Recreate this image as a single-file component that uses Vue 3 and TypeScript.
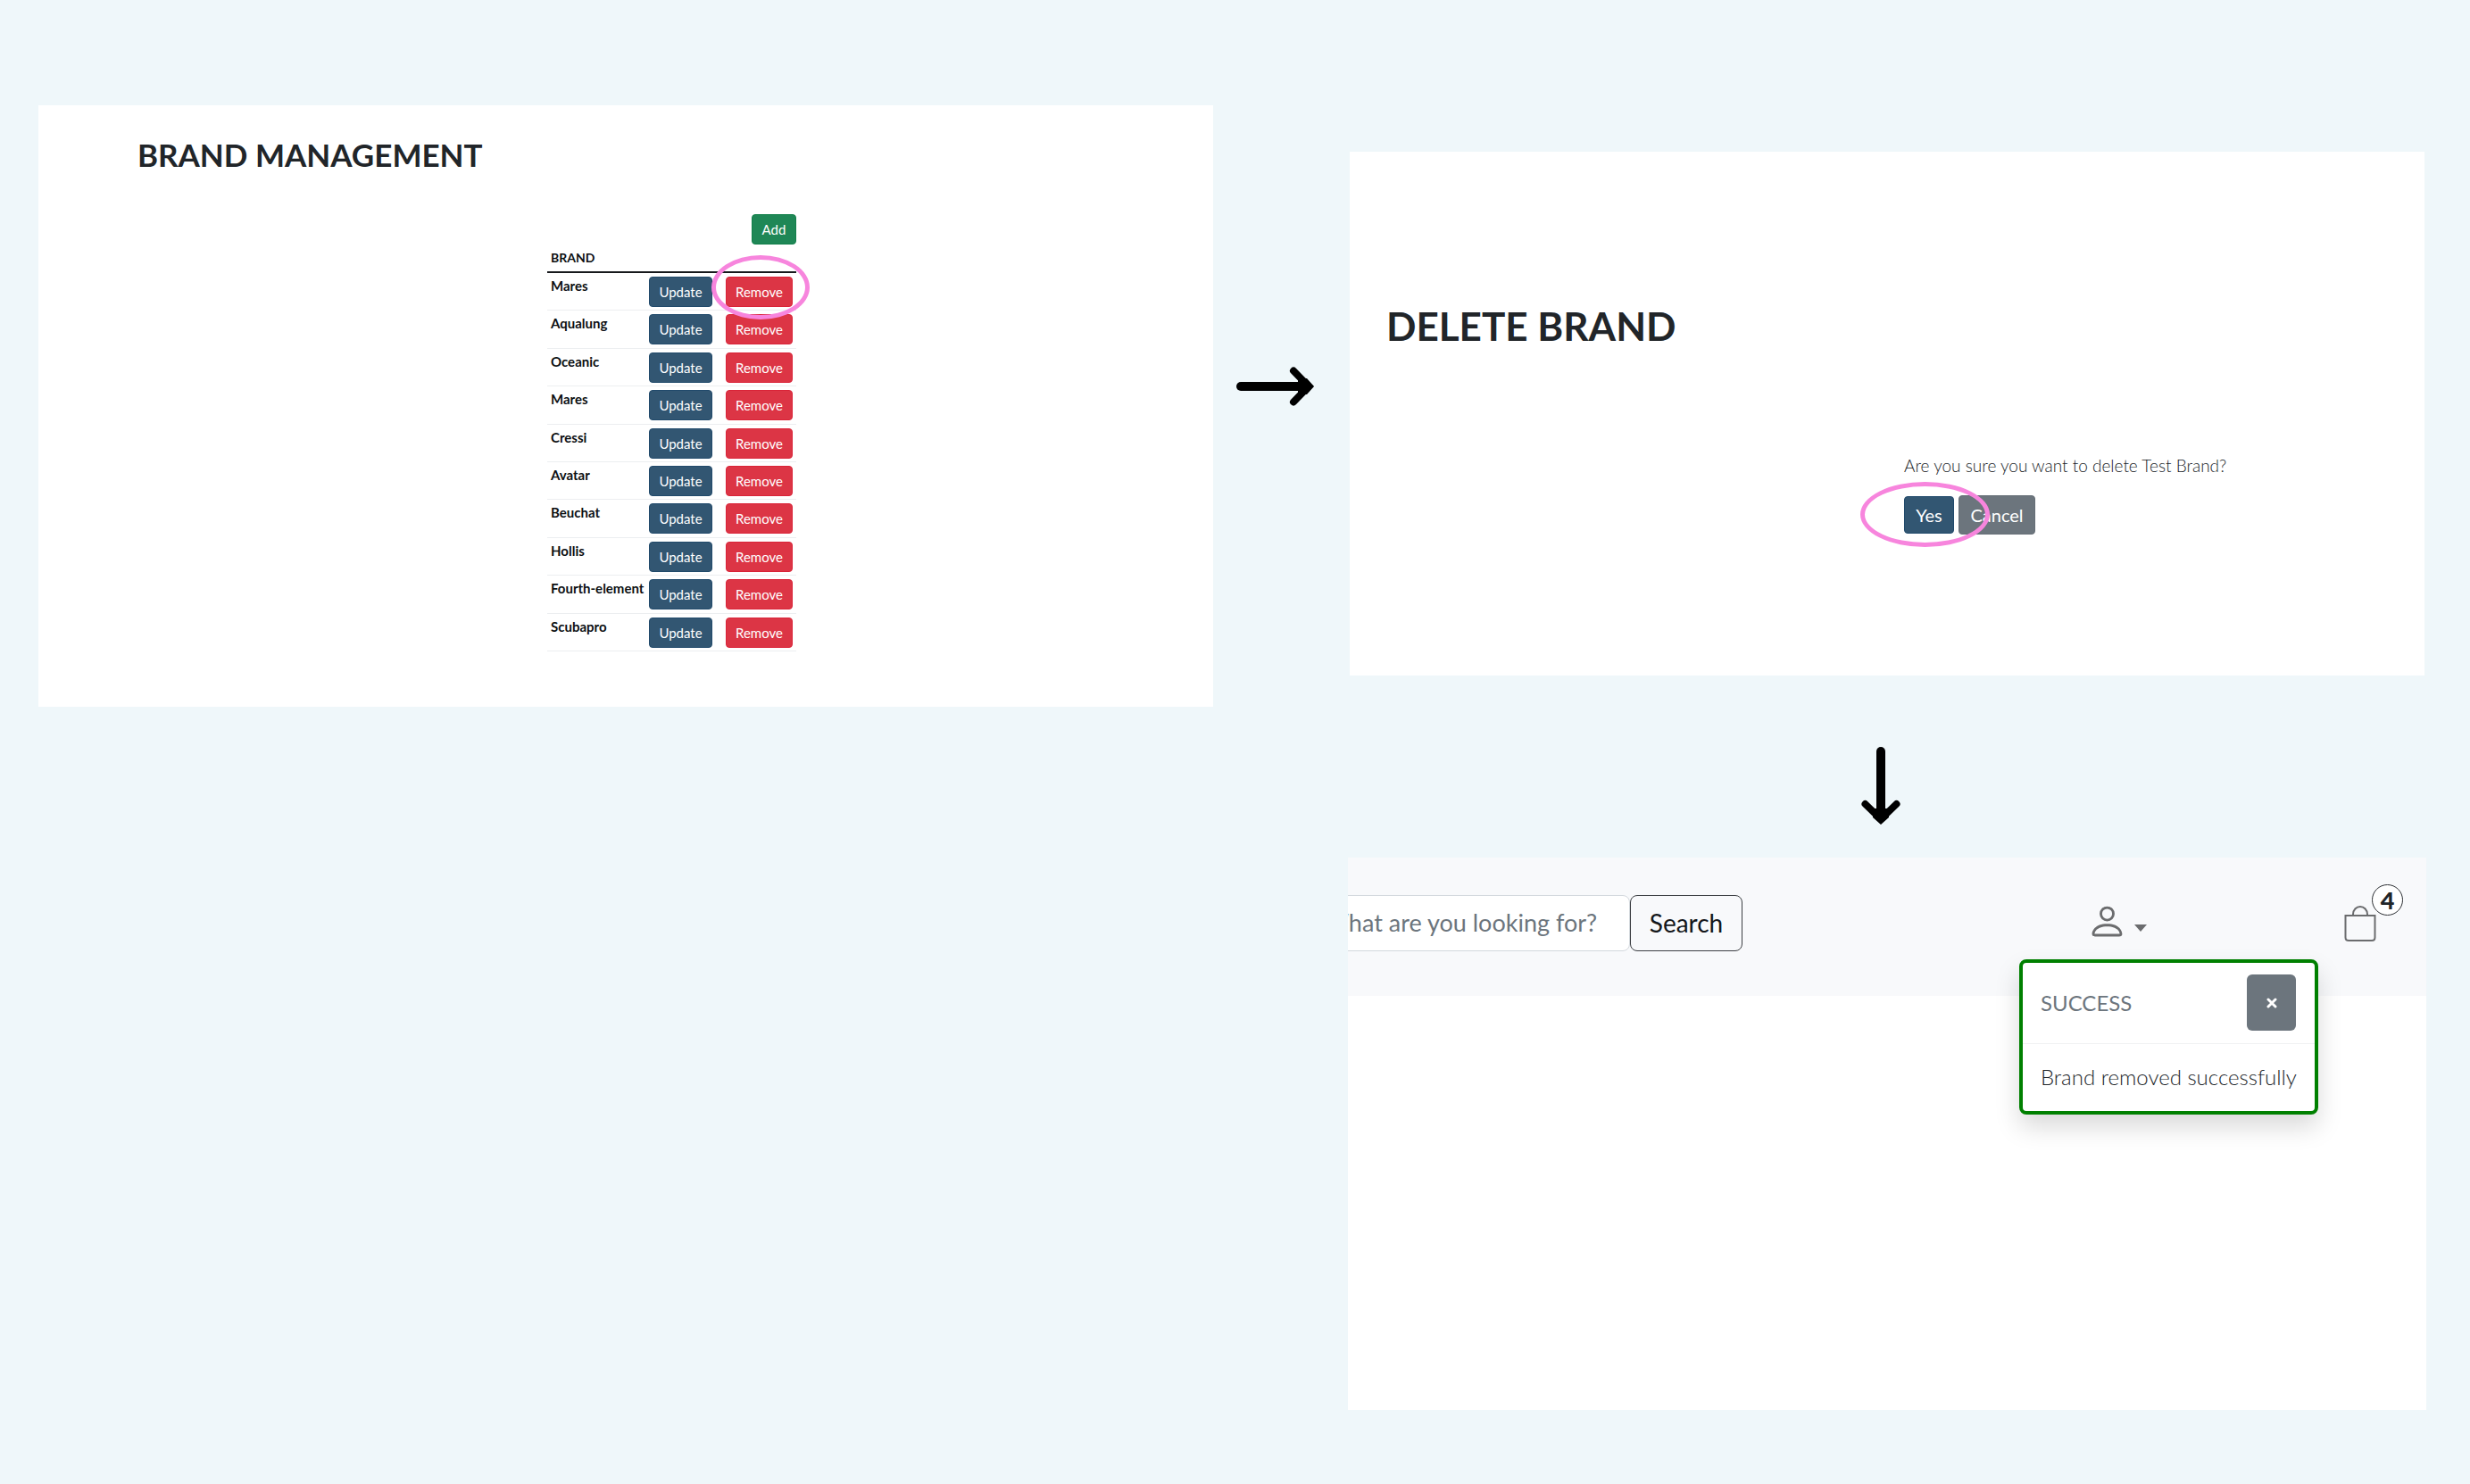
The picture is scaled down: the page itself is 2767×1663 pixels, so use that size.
<script setup lang="ts">
interface Brand {
  id: number
  name: string
}

const names: string[] = [
  'Mares',
  'Aqualung',
  'Oceanic',
  'Mares',
  'Cressi',
  'Avatar',
  'Beuchat',
  'Hollis',
  'Fourth-element',
  'Scubapro',
]

const brands: Brand[] = names.map((name, index) => ({ id: index + 1, name }))
const bagCount = 4
</script>

<template>
  <main class="flow">
    <section class="panel manage">
      <h1 class="manage-title">BRAND MANAGEMENT</h1>
      <div class="manage-body">
        <div class="brand-list">
          <button type="button" class="btn small success">Add</button>
          <table class="brand-table">
            <thead>
              <tr>
                <th class="name-col" scope="col">BRAND</th>
                <th class="update-col"></th>
                <th></th>
              </tr>
            </thead>
            <tbody>
              <tr v-for="(brand, index) in brands" :key="brand.id">
                <th scope="row">{{ brand.name }}</th>
                <td><button type="button" class="btn small primary update">Update</button></td>
                <td>
                  <div class="marked">
                    <button type="button" class="btn small danger">Remove</button>
                    <span v-if="index === 0" class="ring ring-remove"></span>
                  </div>
                </td>
              </tr>
            </tbody>
          </table>
        </div>
      </div>
    </section>

    <svg class="arrow arrow-right" width="90" height="46" viewBox="0 0 90 46" aria-hidden="true">
      <path d="M6 23H80" fill="none" stroke="#000" stroke-width="10" stroke-linecap="round" />
      <path d="M65 5.500L82 23L65 40.500" fill="none" stroke="#000" stroke-width="8" stroke-linecap="round" />
      <path d="M70 14L80 14L88 23L80 32L70 32Z" fill="#000" />
    </svg>

    <div class="steps">
      <section class="panel confirm">
        <h2 class="confirm-title">DELETE BRAND</h2>
        <div class="confirm-body">
          <div class="confirm-content">
            <p class="question">Are you sure you want to delete Test Brand?</p>
            <div class="actions">
              <div class="marked">
                <button type="button" class="btn primary yes">Yes</button>
                <span class="ring ring-yes"></span>
              </div>
              <button type="button" class="btn secondary cancel">Cancel</button>
            </div>
          </div>
        </div>
      </section>

      <svg class="arrow arrow-down" width="46" height="90" viewBox="0 0 46 90" aria-hidden="true">
        <path d="M23 6V80" fill="none" stroke="#000" stroke-width="10" stroke-linecap="round" />
        <path d="M5.500 65L23 82L40.500 65" fill="none" stroke="#000" stroke-width="8" stroke-linecap="round" />
        <path d="M14 70L14 80L23 88L32 80L32 70Z" fill="#000" />
      </svg>

      <section class="panel shop">
        <header class="shop-bar">
          <form class="search" @submit.prevent>
            <input class="search-box" type="search" aria-label="Search products" placeholder="What are you looking for?" />
            <button type="submit" class="search-btn">Search</button>
          </form>
          <button type="button" class="account" aria-label="Account">
            <svg width="45" height="45" viewBox="0 0 16 16" fill="currentColor" aria-hidden="true">
              <path d="M8 8a3 3 0 1 0 0-6 3 3 0 0 0 0 6m2-3a2 2 0 1 1-4 0 2 2 0 0 1 4 0m4 8c0 1-1 1-1 1H3s-1 0-1-1 1-4 6-4 6 3 6 4m-1-.004c-.001-.246-.154-.986-.832-1.664C11.516 10.680 10.289 10 8 10s-3.516.680-4.168 1.332c-.678.678-.830 1.418-.832 1.664z" />
            </svg>
            <svg class="caret" width="14" height="8" viewBox="0 0 14 8" fill="currentColor" aria-hidden="true">
              <path d="M0 0H14L7 8Z" />
            </svg>
          </button>
          <a href="#" class="bag" aria-label="Shopping bag">
            <svg width="40" height="40" viewBox="0 0 40 40" fill="none" stroke="currentColor" stroke-width="2" aria-hidden="true">
              <path d="M3.500 11H36.500V35.500Q36.500 39 33 39H7Q3.500 39 3.500 35.500Z" />
              <path d="M12 11V9.500A8 8.500 0 0 1 28 9.500V11" />
            </svg>
            <span class="count">{{ bagCount }}</span>
          </a>
        </header>

        <aside class="toast" role="status">
          <div class="toast-head">
            <span>SUCCESS</span>
            <button type="button" class="toast-close" aria-label="Close">
              <svg width="14" height="14" viewBox="0 0 14 14" aria-hidden="true">
                <path d="M3 3L11 11M11 3L3 11" stroke="#fff" stroke-width="3" stroke-linecap="round" />
              </svg>
            </button>
          </div>
          <p class="toast-body">Brand removed successfully</p>
        </aside>
      </section>
    </div>
  </main>
</template>

<style>
body {
  margin: 0;
  background: #eff7fa;
}
</style>

<style scoped>
.flow {
  box-sizing: border-box;
  display: flex;
  align-items: flex-start;
  min-height: 100vh;
  padding: 118px 49px 82px 43px;
  background: #eff7fa;
  color: #212529;
  font-family: Lato, "Liberation Sans", sans-serif;
}

h1,
h2,
p {
  margin: 0;
}

.panel {
  box-sizing: border-box;
  background: #fff;
}

.manage {
  flex: 1316 1 0;
  padding: 31px 0 62px;
}

.manage-title {
  padding-left: 111px;
  font-size: 35px;
  font-weight: 700;
  line-height: 48px;
}

.manage-body {
  display: grid;
  grid-template-columns: 570fr 279px 467fr;
  margin-top: 43px;
}

.brand-list {
  grid-column: 2;
  display: flex;
  flex-direction: column;
  align-items: flex-end;
}

.btn {
  box-sizing: border-box;
  display: block;
  padding: 0;
  border: 1px solid;
  border-radius: 4px;
  color: #fff;
  font-family: inherit;
  font-size: 20px;
  cursor: pointer;
}

.small {
  width: 75px;
  height: 34px;
  font-size: 15px;
}

.success {
  width: 50px;
  border-color: #12804a;
  background: #1f8756;
}

.primary {
  border-color: #214a6b;
  background: #325672;
}

.danger {
  border-color: #da2338;
  background: #dc3545;
}

.secondary {
  border-color: #656e76;
  background: #6c757d;
}

.update {
  width: 71px;
}

.brand-table {
  width: 100%;
  height: 456px;
  border-spacing: 0;
  table-layout: fixed;
}

.name-col {
  width: 102px;
}

.update-col {
  width: 78px;
}

.brand-table th,
.brand-table td {
  padding: 4px 4px 3px;
  border-bottom: 1px solid #eceef0;
  color: #0c0f12;
  text-align: left;
  vertical-align: top;
}

.brand-table th {
  font-size: 15px;
  font-weight: 700;
  line-height: 20px;
  white-space: nowrap;
}

.brand-table thead th {
  height: 20px;
  padding: 5px 4px;
  border-bottom: 2px solid #17191c;
  font-size: 14px;
}

.marked {
  position: relative;
}

.ring {
  position: absolute;
  box-sizing: border-box;
  border: 5px solid #f785dd;
  border-radius: 50%;
  pointer-events: none;
}

.ring-remove {
  top: -24px;
  left: -16px;
  z-index: 1;
  width: 110px;
  height: 72px;
}

.ring-yes {
  top: -16px;
  left: -49px;
  z-index: 1;
  width: 145px;
  height: 73px;
}

.arrow {
  flex: none;
  display: block;
}

.arrow-right {
  margin: 292px 36px 0 25px;
}

.arrow-down {
  margin: 79px 14px 35px 0;
}

.steps {
  flex: 1208 1 0;
  display: flex;
  flex-direction: column;
  align-items: center;
  padding-top: 52px;
}

.confirm {
  align-self: stretch;
  margin: 0 2px;
  padding: 167px 0 158px;
}

.confirm-title {
  padding-left: 41px;
  font-size: 44px;
  font-weight: 700;
  line-height: 56px;
}

.confirm-body {
  display: grid;
  grid-template-columns: 621fr 583fr;
  margin-top: 115px;
}

.confirm-content {
  grid-column: 2;
}

.question {
  font-size: 19px;
  font-weight: 300;
  line-height: 28px;
}

.actions {
  display: flex;
  align-items: center;
  gap: 5px;
  margin-top: 19px;
}

.yes {
  width: 56px;
  height: 42px;
}

.cancel {
  width: 86px;
  height: 44px;
}

.shop {
  position: relative;
  align-self: stretch;
  min-height: 619px;
}

.shop-bar {
  display: flex;
  align-items: center;
  padding: 42px 54px 50px 0;
  background: #f8f9fb;
  color: #6b6c6e;
}

.search {
  display: flex;
  justify-content: flex-end;
  width: 442px;
  height: 63px;
  overflow: hidden;
}

.search-box {
  box-sizing: border-box;
  flex: none;
  width: 366px;
  padding: 0 0 2px 22px;
  border: 1px solid #d3d8dd;
  border-radius: 8px;
  background: #fff;
  color: #212529;
  font-family: inherit;
  font-size: 27px;
  appearance: none;
}

.search-box::placeholder {
  color: #6c757d;
  opacity: 1;
}

.search-btn {
  box-sizing: border-box;
  flex: none;
  width: 126px;
  padding: 0 0 2px;
  border: 1px solid #3c3f43;
  border-radius: 8px;
  background: #f8f9fb;
  color: #14171a;
  font-family: inherit;
  font-size: 28px;
}

.account {
  display: flex;
  align-items: center;
  gap: 8px;
  margin: 0 219px 0 auto;
  padding: 0 0 4px;
  border: 0;
  background: none;
  color: #6b6c6e;
}

.caret {
  margin-top: 14px;
}

.bag {
  position: relative;
  color: #6b6c6e;
}

.bag svg {
  display: block;
}

.count {
  position: absolute;
  top: -24px;
  left: 33px;
  box-sizing: border-box;
  width: 35px;
  height: 35px;
  border: 1px solid #2c2f33;
  border-radius: 50%;
  background: #fff;
  color: #212529;
  font-size: 27px;
  font-weight: 900;
  line-height: 33px;
  text-align: center;
}

.toast {
  position: absolute;
  top: 114px;
  right: 121px;
  box-sizing: border-box;
  width: 335px;
  border: 4px solid #008000;
  border-radius: 8px;
  background: #fff;
  box-shadow: 0 14px 28px rgba(0, 0, 0, 0.15);
}

.toast-head {
  display: flex;
  align-items: center;
  justify-content: space-between;
  padding: 13px 21px 14px 20px;
  border-bottom: 1px solid #f0f1f2;
  color: #6c757d;
  font-size: 24px;
}

.toast-close {
  display: flex;
  align-items: center;
  justify-content: center;
  width: 55px;
  height: 63px;
  padding: 0;
  border: 0;
  border-radius: 6px;
  background: #6c757d;
}

.toast-body {
  padding: 19px 20px 20px;
  font-size: 24px;
  font-weight: 300;
  line-height: 36px;
  white-space: nowrap;
}
</style>
